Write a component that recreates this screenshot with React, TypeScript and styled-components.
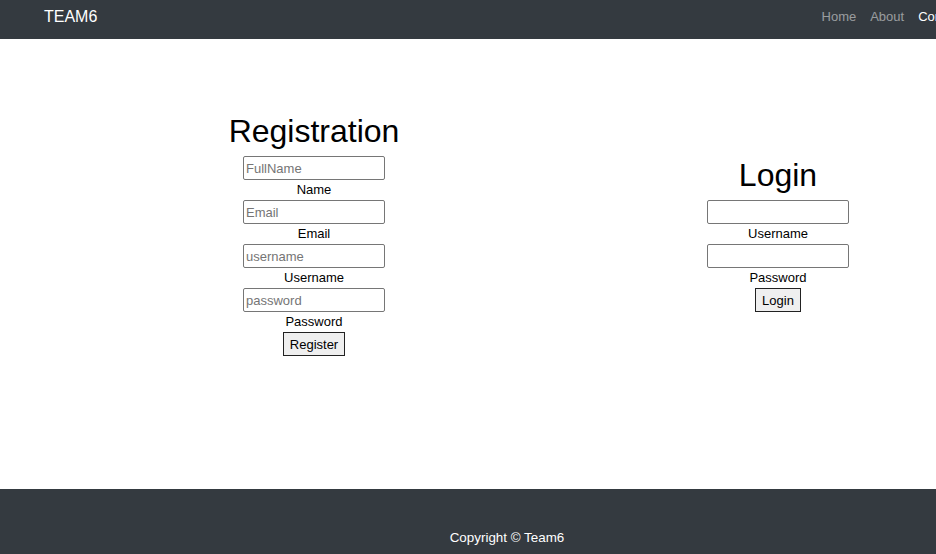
import { Fragment } from "react";
import styled, { createGlobalStyle } from "styled-components";

const GlobalStyle = createGlobalStyle`
  html, body {
    margin: 0;
    padding: 0;
    overflow-x: hidden;
    background: #ffffff;
  }
  body {
    font-family: "Liberation Sans", Arial, sans-serif;
    color: #000000;
  }
`;

const Page = styled.div`
  width: 1014px;
  min-height: 554px;
  display: flex;
  flex-direction: column;
`;

const NavBar = styled.nav`
  height: 39px;
  box-sizing: border-box;
  padding: 0 44px 6px 44px;
  background: #343a40;
  display: flex;
  align-items: center;
  justify-content: space-between;
`;

const Brand = styled.a`
  color: #ffffff;
  font-size: 16px;
  line-height: 20px;
  text-decoration: none;
`;

const NavLinks = styled.ul`
  display: flex;
  margin: 0;
  padding: 0;
  list-style: none;
`;

const NavLink = styled.a<{ $active?: boolean }>`
  display: block;
  padding: 0 7px;
  font-size: 13px;
  line-height: 17px;
  text-decoration: none;
  color: ${(p) => (p.$active ? "#ffffff" : "rgba(255, 255, 255, 0.5)")};
`;

const Main = styled.main`
  flex: 1;
  padding: 74px 0 0 82px;
  display: grid;
  grid-template-columns: 464px 464px;
  align-items: center;
  align-content: start;
`;

const FormColumn = styled.form`
  display: flex;
  flex-direction: column;
  align-items: center;
`;

const Title = styled.h1`
  margin: 0 0 6px 0;
  font-size: 32px;
  line-height: 37px;
  font-weight: 400;
`;

const Input = styled.input`
  width: 142px;
  height: 24px;
  box-sizing: border-box;
  padding: 1px 2px;
  border: 1px solid #767676;
  border-radius: 2px;
  font-family: "Liberation Sans", Arial, sans-serif;
  font-size: 13px;
  color: #000;
  &::placeholder {
    color: #757575;
  }
`;

const Label = styled.label`
  font-size: 13px;
  line-height: 20px;
`;

const SubmitButton = styled.button`
  height: 24px;
  box-sizing: border-box;
  padding: 0 6px;
  border: 1px solid #222;
  border-radius: 0;
  background: #efefef;
  font-family: "Liberation Sans", Arial, sans-serif;
  font-size: 13px;
  color: #000;
`;

const Footer = styled.footer`
  height: 65px;
  box-sizing: border-box;
  padding-top: 41px;
  background: #343a40;
  color: #ffffff;
  text-align: center;
  font-size: 13.4px;
  line-height: 16px;
`;

const registerFields = [
  { placeholder: "FullName", label: "Name", type: "text" },
  { placeholder: "Email", label: "Email", type: "email" },
  { placeholder: "username", label: "Username", type: "text" },
  { placeholder: "password", label: "Password", type: "password" },
];

const loginFields = [
  { label: "Username", type: "text" },
  { label: "Password", type: "password" },
];

export default function App() {
  return (
    <>
      <GlobalStyle />
      <Page>
        <NavBar>
          <Brand href="#">TEAM6</Brand>
          <NavLinks>
            <li><NavLink href="#">Home</NavLink></li>
            <li><NavLink href="#">About</NavLink></li>
            <li><NavLink href="#" $active>Contact</NavLink></li>
          </NavLinks>
        </NavBar>
        <Main>
          <FormColumn onSubmit={(e) => e.preventDefault()}>
            <Title>Registration</Title>
            {registerFields.map((f) => (
              <Fragment key={f.label}>
                <Input type={f.type} placeholder={f.placeholder} />
                <Label>{f.label}</Label>
              </Fragment>
            ))}
            <SubmitButton type="submit">Register</SubmitButton>
          </FormColumn>
          <FormColumn onSubmit={(e) => e.preventDefault()}>
            <Title>Login</Title>
            {loginFields.map((f) => (
              <Fragment key={f.label}>
                <Input type={f.type} />
                <Label>{f.label}</Label>
              </Fragment>
            ))}
            <SubmitButton type="submit">Login</SubmitButton>
          </FormColumn>
        </Main>
        <Footer>Copyright © Team6</Footer>
      </Page>
    </>
  );
}
